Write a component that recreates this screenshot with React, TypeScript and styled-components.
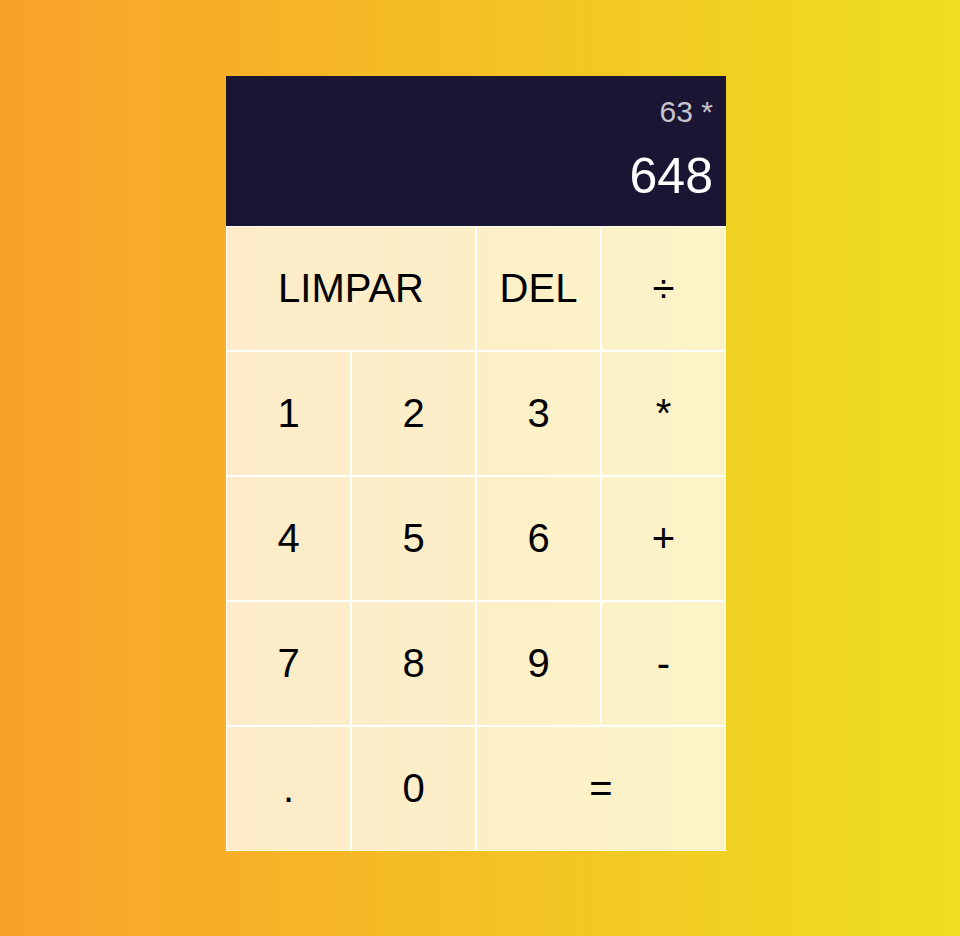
import React from "react";
import styled, { createGlobalStyle } from "styled-components";

const Global = createGlobalStyle`
  *, *::before, *::after { box-sizing: border-box; }
  html, body { margin: 0; padding: 0; }
  body {
    min-height: 936px;
    background: linear-gradient(to right, #f9a12a, #eedf1f);
    font-family: "Liberation Sans", Arial, sans-serif;
  }
`;

const Page = styled.div`
  min-height: 936px;
  padding: 76px 0 0 226px;
`;

const Grid = styled.div`
  display: grid;
  grid-template-columns: repeat(4, 125px);
  grid-template-rows: 150px repeat(5, 125px);
  width: 500px;
`;

const Output = styled.div`
  grid-column: 1 / -1;
  background-color: #1b1534;
  display: flex;
  flex-direction: column;
  align-items: flex-end;
  justify-content: space-around;
  padding: 10px 13px 12px;
  word-break: break-all;
`;

const Previous = styled.div`
  color: rgba(255, 255, 255, 0.75);
  font-size: 30px;
`;

const Current = styled.div`
  color: #ffffff;
  font-size: 50px;
`;

const Key = styled.button<{ $span?: number }>`
  grid-column: span ${(p) => p.$span ?? 1};
  font-family: "Liberation Sans", Arial, sans-serif;
  font-size: 40px;
  color: #000;
  border: 1px solid #ffffff;
  outline: none;
  background-color: rgba(255, 255, 255, 0.75);
  cursor: pointer;
  padding: 0;
  margin: 0;
`;

const keys: { label: string; span?: number }[] = [
  { label: "LIMPAR", span: 2 },
  { label: "DEL" },
  { label: "÷" },
  { label: "1" },
  { label: "2" },
  { label: "3" },
  { label: "*" },
  { label: "4" },
  { label: "5" },
  { label: "6" },
  { label: "+" },
  { label: "7" },
  { label: "8" },
  { label: "9" },
  { label: "-" },
  { label: "." },
  { label: "0" },
  { label: "=", span: 2 },
];

export default function App() {
  return (
    <>
      <Global />
      <Page>
        <Grid>
          <Output>
            <Previous>63 *</Previous>
            <Current>648</Current>
          </Output>
          {keys.map((k) => (
            <Key key={k.label} $span={k.span}>
              {k.label}
            </Key>
          ))}
        </Grid>
      </Page>
    </>
  );
}
